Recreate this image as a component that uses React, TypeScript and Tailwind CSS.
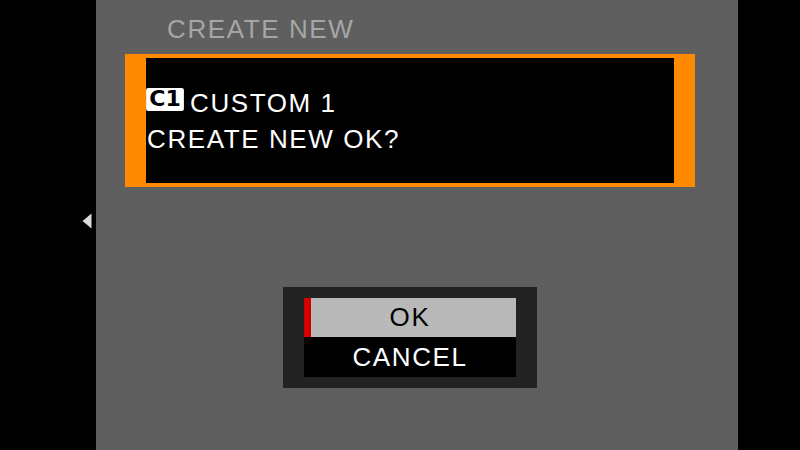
const textFont = "font-['Liberation_Sans',Arial,sans-serif]";

function LeftArrow() {
    return (
        <svg width="10" height="16" viewBox="0 0 10 16">
            <polygon points="9.5,0.5 9.5,15.5 0.5,8" fill="#dcdcdc" />
        </svg>
    );
}

export default function App() {
    return (
        <div className={`w-[800px] h-[450px] bg-black flex overflow-hidden ${textFont}`}>
            {/* left gutter with page arrow */}
            <div className="w-[96px] h-full flex justify-end pr-[4px] pt-[213px]">
                <LeftArrow />
            </div>

            {/* menu panel */}
            <div className="w-[642px] h-full bg-[#5f5f5f] flex flex-col">
                <div className="pt-[11px] pl-[71px] text-[26px] leading-[36px] tracking-[1.6px] text-[#a6a6a6]">
                    CREATE NEW
                </div>

                <div className="ml-[29px] mt-[7px] w-[570px] h-[133px] bg-[#ff8a00] pt-[4px] pb-[4px] px-[21px]">
                    <div className="h-full bg-black pt-[27px] pl-[1px] text-white text-[26px] leading-[36px] tracking-[1.6px]">
                        <div className="flex items-start">
                            <span className="mt-[3px] w-[36px] h-[23px] bg-white rounded-[2px] flex items-center justify-center text-black text-[21px] leading-none font-bold tracking-[0px] font-['DejaVu_Sans',sans-serif] scale-x-[1.05]">
                                C1
                            </span>
                            <span className="ml-[7px]">CUSTOM 1</span>
                        </div>
                        <div>CREATE NEW OK?</div>
                    </div>
                </div>

                <div className="ml-[187px] mt-[100px] w-[254px] h-[101px] bg-[#232323] pt-[11px] px-[21px]">
                    <div className="relative h-[39px] bg-[#b9b9b9] flex items-center justify-center text-black text-[26px] tracking-[1.6px]">
                        <span className="absolute left-0 top-0 w-[7px] h-full bg-[#d40000]" />
                        OK
                    </div>
                    <div className="h-[40px] bg-black flex items-center justify-center text-white text-[26px] tracking-[1.6px]">
                        CANCEL
                    </div>
                </div>
            </div>
        </div>
    );
}
